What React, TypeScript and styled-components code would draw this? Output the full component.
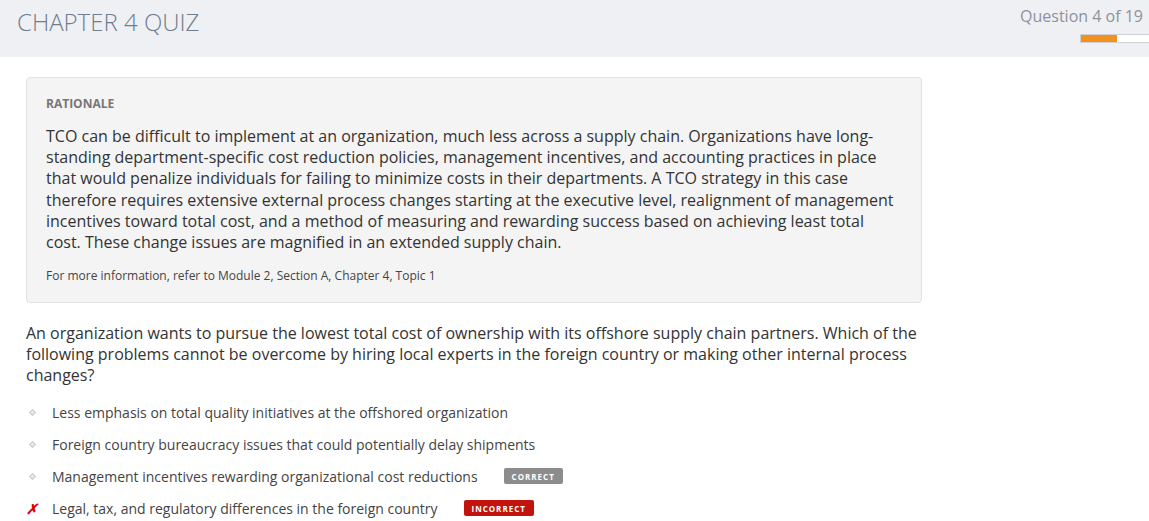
import styled, { createGlobalStyle } from 'styled-components';

const GlobalStyle = createGlobalStyle`
  html, body {
    margin: 0;
    padding: 0;
    background: #ffffff;
    font-family: 'Open Sans', 'Liberation Sans', sans-serif;
  }
`;

interface Option {
  text: string;
  mark?: 'correct' | 'incorrect';
  wrong?: boolean;
}

const options: Option[] = [
  { text: 'Less emphasis on total quality initiatives at the offshored organization' },
  { text: 'Foreign country bureaucracy issues that could potentially delay shipments' },
  { text: 'Management incentives rewarding organizational cost reductions', mark: 'correct' },
  { text: 'Legal, tax, and regulatory differences in the foreign country', mark: 'incorrect', wrong: true },
];

const App = () => {
  const current = 4;
  const total = 19;
  return (
    <>
      <GlobalStyle />
      <Header>
        <Title>CHAPTER 4 QUIZ</Title>
        <Progress>
          <Counter>
            Question {current} of {total}
          </Counter>
          <Track>
            <Fill style={{ width: `${(current / total) * 250}%` }} />
          </Track>
        </Progress>
      </Header>
      <Main>
        <RationaleCard>
          <Label>RATIONALE</Label>
          <Body>
            TCO can be difficult to implement at an organization, much less across a supply chain.
            Organizations have long-standing department-specific cost reduction policies, management
            incentives, and accounting practices in place that would penalize individuals for failing to
            minimize costs in their departments. A TCO strategy in this case therefore requires extensive
            external process changes starting at the executive level, realignment of management
            incentives toward total cost, and a method of measuring and rewarding success based on
            achieving least total cost. These change issues are magnified in an extended supply chain.
          </Body>
          <Reference>For more information, refer to Module 2, Section A, Chapter 4, Topic 1</Reference>
        </RationaleCard>
        <QuestionText>
          An organization wants to pursue the lowest total cost of ownership with its offshore supply
          chain partners. Which of the following problems cannot be overcome by hiring local experts in
          the foreign country or making other internal process changes?
        </QuestionText>
        <OptionList>
          {options.map((o) => (
            <OptionRow key={o.text}>
              <Marker $wrong={o.wrong}>{o.wrong ? '✗' : <Diamond />}</Marker>
              <OptionText>{o.text}</OptionText>
              {o.mark && <Badge $kind={o.mark}>{o.mark === 'correct' ? 'CORRECT' : 'INCORRECT'}</Badge>}
            </OptionRow>
          ))}
        </OptionList>
      </Main>
    </>
  );
};

export default App;

const Header = styled.header`
  height: 57px;
  background-color: #eff0f4;
  display: flex;
  justify-content: space-between;
  align-items: flex-start;
  padding-left: 17px;
`;

const Title = styled.h1`
  margin: 0;
  padding-top: 6px;
  font-size: 24px;
  font-weight: 300;
  line-height: 32px;
  color: #6f7d8c;
`;

const Progress = styled.div`
  display: flex;
  flex-direction: column;
  align-items: flex-end;
  padding-top: 5px;
`;

const Counter = styled.div`
  font-size: 16px;
  line-height: 22px;
  color: #8d929b;
  padding-right: 6px;
`;

const Track = styled.div`
  margin-top: 7px;
  width: 68px;
  height: 7px;
  border: 1px solid #cfd0d3;
  border-right: none;
  background: #ffffff;
`;

const Fill = styled.div`
  height: 100%;
  max-width: 100%;
  background-color: #f39020;
`;

const Main = styled.main`
  width: 896px;
  padding: 20px 26px 0;
`;

const RationaleCard = styled.section`
  background-color: #f4f4f4;
  border: 1px solid #e2e2e2;
  border-radius: 4px;
  padding: 18px 19px 18px;
`;

const Label = styled.div`
  font-size: 12px;
  font-weight: 700;
  line-height: 16px;
  color: #777777;
`;

const Body = styled.p`
  margin: 14px 0 0;
  font-size: 16px;
  line-height: 21.2px;
  color: #333333;
`;

const Reference = styled.div`
  margin-top: 15px;
  font-size: 12px;
  line-height: 16px;
  color: #444444;
`;

const QuestionText = styled.p`
  margin: 20px 0 0;
  font-size: 16px;
  line-height: 21px;
  color: #333333;
`;

const OptionList = styled.ul`
  list-style: none;
  margin: 10px 0 0;
  padding: 0;
`;

const OptionRow = styled.li`
  display: flex;
  align-items: center;
  height: 32px;
`;

const Marker = styled.span<{ $wrong?: boolean }>`
  width: 12px;
  margin-right: 14px;
  display: flex;
  justify-content: center;
  color: #e00000;
  font-size: 14px;
  font-weight: 700;
  font-style: italic;
`;

const Diamond = styled.span`
  width: 3px;
  height: 3px;
  border: 1px solid #cacaca;
  background: #ebebeb;
  transform: rotate(45deg);
`;

const OptionText = styled.span`
  font-size: 14px;
  color: #444444;
`;

const Badge = styled.span<{ $kind: 'correct' | 'incorrect' }>`
  margin-left: 26px;
  height: 16px;
  padding: 0 8px;
  border-radius: 2px;
  display: inline-flex;
  align-items: center;
  font-size: 8px;
  font-weight: 700;
  letter-spacing: 1px;
  color: #ffffff;
  background-color: ${({ $kind }) => ($kind === 'correct' ? '#8c8c8c' : '#c2140c')};
`;
